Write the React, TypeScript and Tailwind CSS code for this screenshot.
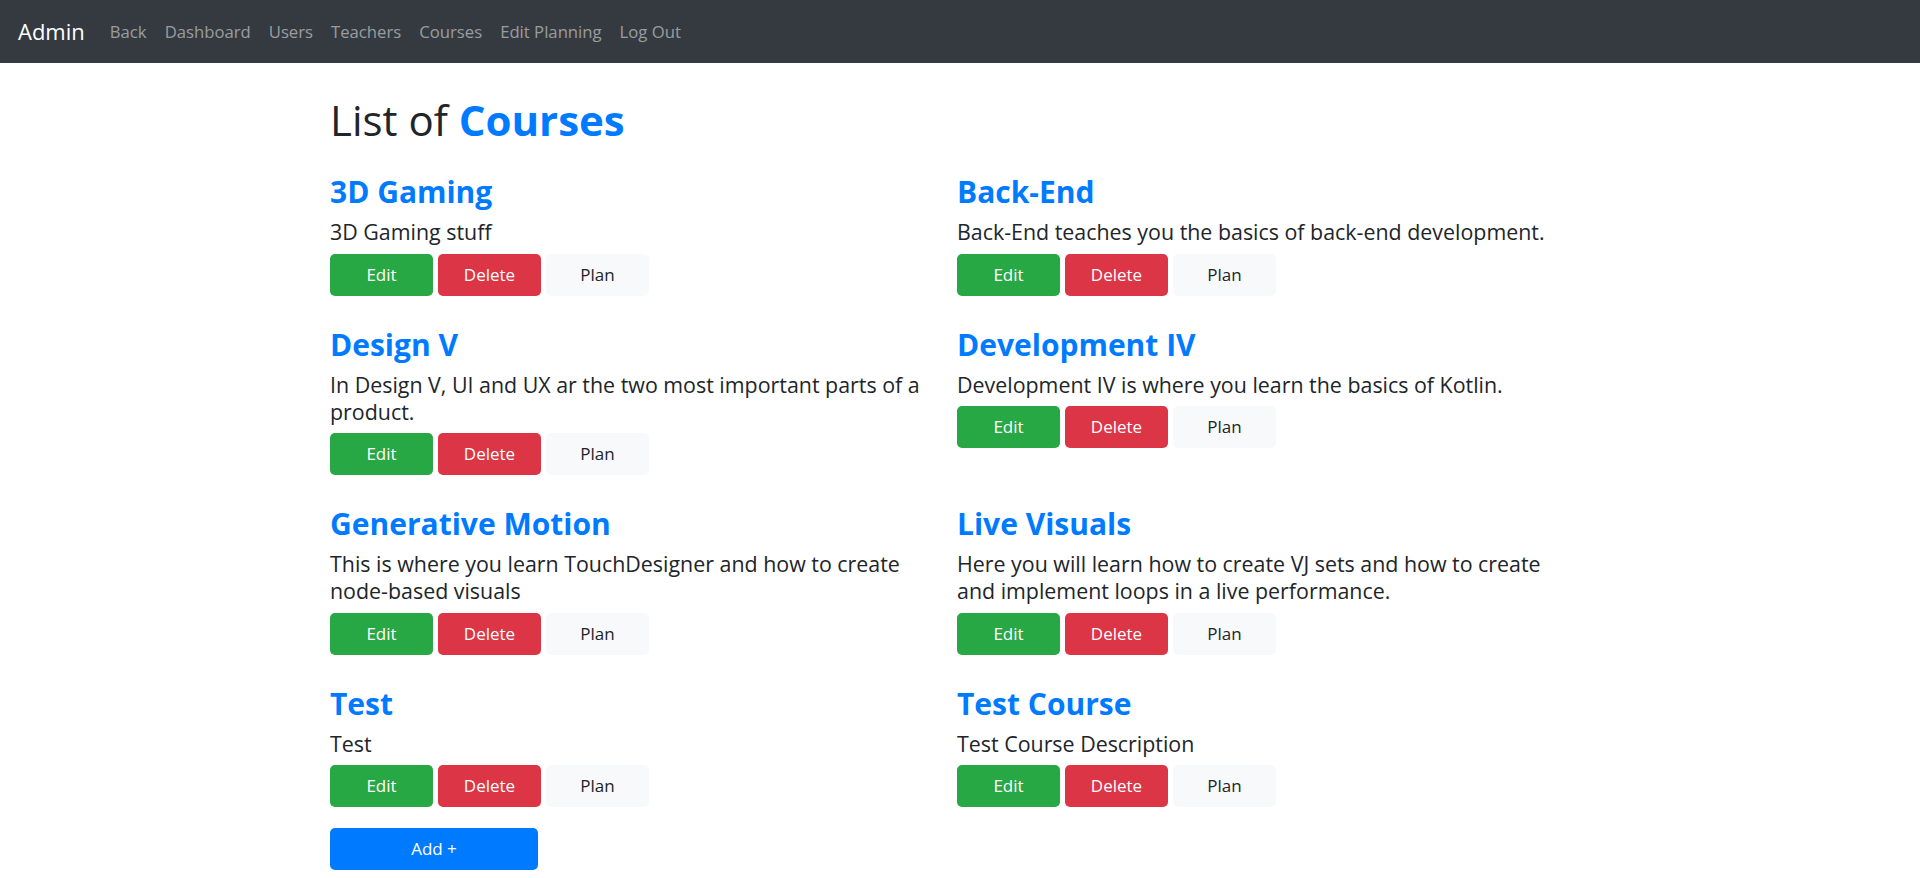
import React from 'react';

const NAV_LINKS = ['Back', 'Dashboard', 'Users', 'Teachers', 'Courses', 'Edit Planning', 'Log Out'];

const COURSES = [
  { name: '3D Gaming', description: '3D Gaming stuff' },
  { name: 'Back-End', description: 'Back-End teaches you the basics of back-end development.' },
  { name: 'Design V', description: 'In Design V, UI and UX ar the two most important parts of a product.' },
  { name: 'Development IV', description: 'Development IV is where you learn the basics of Kotlin.' },
  { name: 'Generative Motion', description: 'This is where you learn TouchDesigner and how to create node-based visuals' },
  { name: 'Live Visuals', description: 'Here you will learn how to create VJ sets and how to create and implement loops in a live performance.' },
  { name: 'Test', description: 'Test' },
  { name: 'Test Course', description: 'Test Course Description' },
];

const FONT = "font-['Open_Sans',sans-serif]";

function CourseItem({ name, description }: { name: string; description: string }) {
  return (
    <div className="mb-[30px]">
      <h3 className="text-[30px] leading-[37px] font-bold text-[#007bff] mb-[8px]">{name}</h3>
      <p className="text-[21.4px] leading-[27px] text-[#212529] w-[605px] mb-[8.5px]">{description}</p>
      <div className="flex gap-[5px]">
        <button className="w-[103px] h-[42px] rounded-[5px] bg-[#28a745] text-white text-[17px]">Edit</button>
        <button className="w-[103px] h-[42px] rounded-[5px] bg-[#dc3545] text-white text-[17px]">Delete</button>
        <button className="w-[103px] h-[42px] rounded-[5px] bg-[#f8f9fa] text-[#212529] text-[17px]">Plan</button>
      </div>
    </div>
  );
}

export default function App() {
  return (
    <div className={`min-h-screen bg-white ${FONT}`}>
      {/* Navbar */}
      <nav className="h-[63px] bg-[#343a40] flex items-center px-[18px]">
        <span className="text-white text-[22px] mr-[16px]">Admin</span>
        <div className="flex">
          {NAV_LINKS.map(link => (
            <a key={link} className="px-[9px] text-[16.7px] text-white/50">{link}</a>
          ))}
        </div>
      </nav>

      <div className="mx-auto max-w-[1320px] px-[30px]">
        <h1 className="mt-[30px] mb-[27px] text-[42px] leading-[53px] text-[#212529]">
          List of <span className="font-bold text-[#007bff]">Courses</span>
        </h1>

        <div className="grid grid-cols-[627px_627px]">
          {COURSES.map(c => <CourseItem key={c.name} {...c} />)}
        </div>

        <button className="-mt-[21px] w-[208px] h-[42px] rounded-[5px] bg-[#007bff] text-white text-[17px]">Add +</button>
      </div>
    </div>
  );
}
